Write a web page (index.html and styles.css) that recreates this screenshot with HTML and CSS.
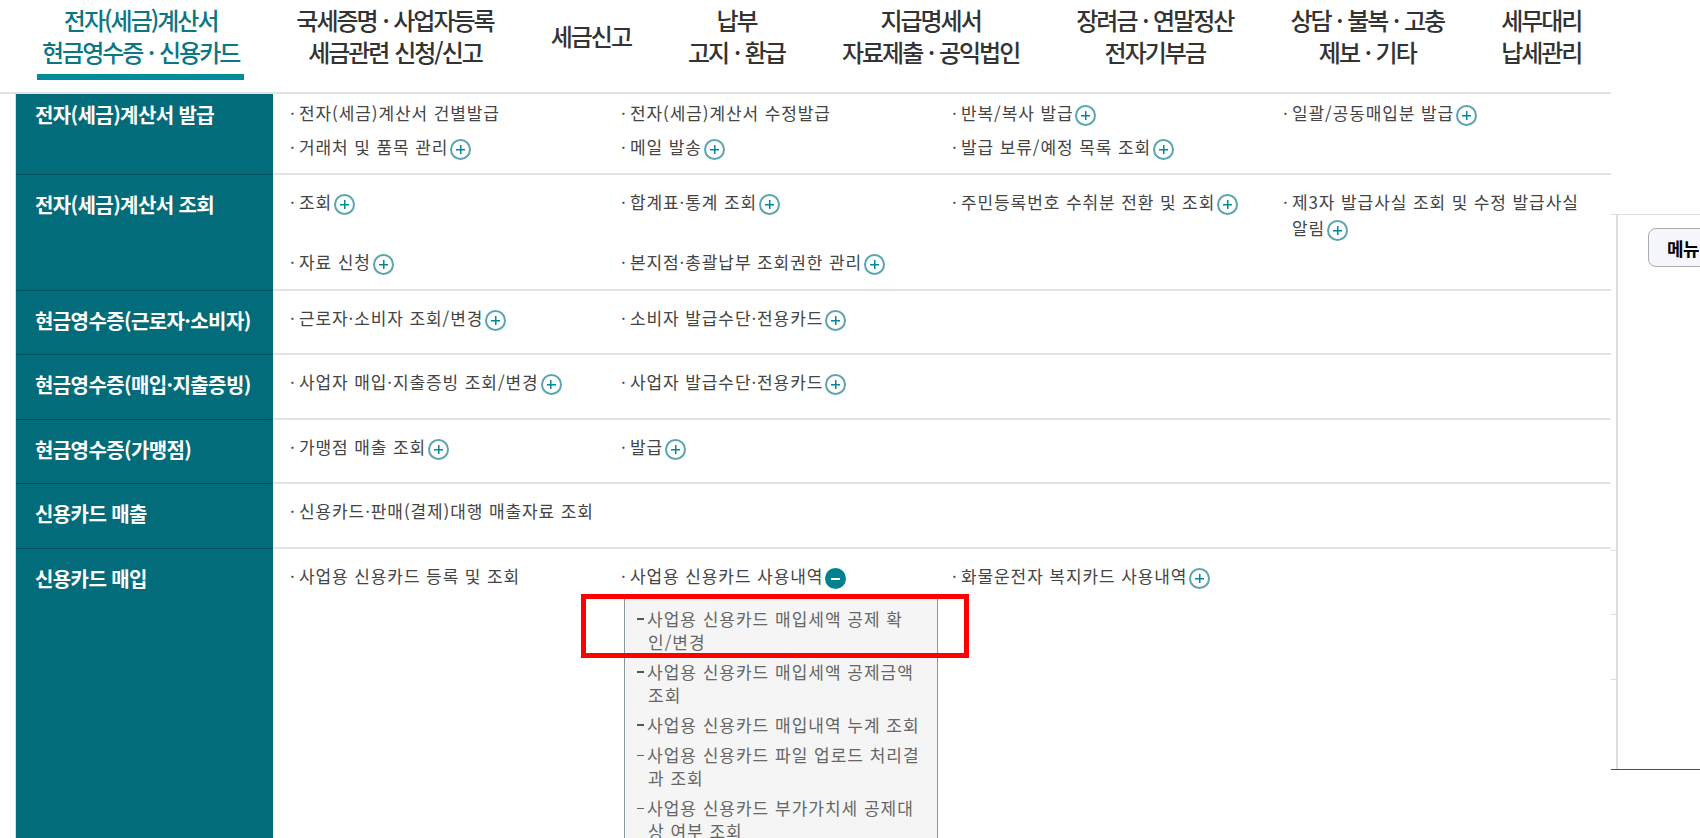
FILE: index.html
```html
<!DOCTYPE html>
<html lang="ko">
<head>
    <meta charset="utf-8" />
    <title>전자(세금)계산서 메뉴</title>
    <link rel="stylesheet" href="styles.css">
</head>
<body>
    <div id="page">
        <div class="gnb">
            <a class="gnb-item on">전자(세금)계산서<br>현금영수증 · 신용카드</a>
            <a class="gnb-item">국세증명 · 사업자등록<br>세금관련 신청/신고</a>
            <a class="gnb-item single">세금신고</a>
            <a class="gnb-item">납부<br>고지 · 환급</a>
            <a class="gnb-item">지급명세서<br>자료제출 · 공익법인</a>
            <a class="gnb-item">장려금 · 연말정산<br>전자기부금</a>
            <a class="gnb-item">상담 · 불복 · 고충<br>제보 · 기타</a>
            <a class="gnb-item">세무대리<br>납세관리</a>
        </div>

        <div class="menu">
            <div class="row row1">
                <div class="tit">전자(세금)계산서 발급</div>
                <ul class="cell">
                    <li>전자(세금)계산서 건별발급</li>
                    <li>전자(세금)계산서 수정발급</li>
                    <li>반복/복사 발급<i class="ico"></i></li>
                    <li>일괄/공동매입분 발급<i class="ico"></i></li>
                    <li>거래처 및 품목 관리<i class="ico"></i></li>
                    <li>메일 발송<i class="ico"></i></li>
                    <li>발급 보류/예정 목록 조회<i class="ico"></i></li>
                </ul>
            </div>
            <div class="row row2">
                <div class="tit">전자(세금)계산서 조회</div>
                <ul class="cell">
                    <li>조회<i class="ico"></i></li>
                    <li>합계표·통계 조회<i class="ico"></i></li>
                    <li>주민등록번호 수취분 전환 및 조회<i class="ico"></i></li>
                    <li>제3자 발급사실 조회 및 수정 발급사실 알림<i class="ico"></i></li>
                    <li>자료 신청<i class="ico"></i></li>
                    <li>본지점·총괄납부 조회권한 관리<i class="ico"></i></li>
                </ul>
            </div>
            <div class="row row3">
                <div class="tit">현금영수증(근로자·소비자)</div>
                <ul class="cell">
                    <li>근로자·소비자 조회/변경<i class="ico"></i></li>
                    <li>소비자 발급수단·전용카드<i class="ico"></i></li>
                </ul>
            </div>
            <div class="row row4">
                <div class="tit">현금영수증(매입·지출증빙)</div>
                <ul class="cell">
                    <li>사업자 매입·지출증빙 조회/변경<i class="ico"></i></li>
                    <li>사업자 발급수단·전용카드<i class="ico"></i></li>
                </ul>
            </div>
            <div class="row row3">
                <div class="tit">현금영수증(가맹점)</div>
                <ul class="cell">
                    <li>가맹점 매출 조회<i class="ico"></i></li>
                    <li>발급<i class="ico"></i></li>
                </ul>
            </div>
            <div class="row row4">
                <div class="tit">신용카드 매출</div>
                <ul class="cell">
                    <li class="wide">신용카드·판매(결제)대행 매출자료 조회</li>
                </ul>
            </div>
            <div class="row row-last">
                <div class="tit">신용카드 매입</div>
                <ul class="cell">
                    <li>사업용 신용카드 등록 및 조회</li>
                    <li>사업용 신용카드 사용내역<i class="ico minus"></i>
                        <ul class="sub">
                            <li class="seen">사업용 신용카드 매입세액 공제 확인/변경</li>
                            <li class="seen">사업용 신용카드 매입세액 공제금액 조회</li>
                            <li class="seen">사업용 신용카드 매입내역 누계 조회</li>
                            <li>사업용 신용카드 파일 업로드 처리결과 조회</li>
                            <li>사업용 신용카드 부가가치세 공제대상 여부 조회</li>
                        </ul>
                    </li>
                    <li>화물운전자 복지카드 사용내역<i class="ico"></i></li>
                </ul>
            </div>
        </div>

        <!-- 빨간 표시, 오른쪽 패널은 내용 위에 겹쳐 있음 -->
        <div class="mark"></div>
        <div class="side">
            <i class="tick t1"></i>
            <i class="tick t2"></i>
            <i class="tick t3"></i>
            <button class="side-btn">메뉴</button>
        </div>
    </div>
</body>
</html>
```

FILE: styles.css
```css
* {
    padding: 0;
    margin: 0;
    box-sizing: border-box;
}

html, body {
    height: 100%;
    overflow: hidden;
    background: #fff;
}

body {
    font-family: "Noto Sans CJK KR", "Noto Sans", sans-serif;
    color: #444;
}

ul {
    list-style: none;
}

#page {
    position: relative;
    width: 1700px;
    height: 838px;
    overflow: hidden;
}

/* 상단 메뉴 */
.gnb {
    display: flex;
    gap: 47px;
    width: 1611px;
    height: 94px;
    padding-left: 37px;
    border-bottom: 2px solid #e2e2e2;
}

.gnb-item {
    display: block;
    height: 80px;
    padding: 4px 5px 0;
    font-size: 24px;
    line-height: 32px;
    font-weight: 500;
    letter-spacing: -2px;
    word-spacing: 1px;
    text-align: center;
    white-space: nowrap;
    color: #333;
}

.gnb-item.single {
    padding-top: 20px;
}

.gnb-item.on {
    color: #0b7783;
    border-bottom: 6px solid #008c9b;
}

/* 메뉴 표 */
.menu {
    width: 1596px;
    margin-left: 15px;
    border-left: 1px solid #ddd;
}

.row {
    display: flex;
    border-bottom: 2px solid #e4e4e4;
}

.row1 { height: 81px; }
.row2 { height: 116px; }
.row3 { height: 64px; }
.row4 { height: 65px; }
.row-last { height: 300px; border-bottom: 0; }

.tit {
    flex: none;
    width: 257px;
    margin-bottom: -2px;
    padding: 17px 0 0 19px;
    font-size: 20px;
    line-height: 26px;
    font-weight: 700;
    letter-spacing: -0.6px;
    color: #fff;
    background: #026c7a;
    border-bottom: 1px solid #02525d;
}

.row1 .tit {
    padding-top: 8px;
}

.row-last .tit {
    margin-bottom: 0;
    border-bottom: 0;
}

.cell {
    flex: 1;
    display: grid;
    grid-template-columns: repeat(4, 331px);
    align-content: start;
    row-gap: 8px;
    padding: 14px 0 0 17px;
}

.row1 .cell {
    padding-top: 6px;
}

.cell > li {
    padding: 0 20px 0 9px;
    font-size: 17px;
    line-height: 26px;
    letter-spacing: 0.9px;
    text-indent: -9px;
    color: #444;
}

.cell > li::before {
    content: "·";
    display: inline-block;
    width: 9px;
    text-indent: 0;
    letter-spacing: 0;
}

.cell > li.wide {
    grid-column: span 2;
}

/* 더보기 아이콘 */
.ico {
    display: inline-block;
    width: 21px;
    height: 21px;
    margin-left: 2px;
    vertical-align: -6px;
    text-indent: 0;
    border: 2px solid #5aa5af;
    border-radius: 50%;
    background:
        linear-gradient(#00899a, #00899a) center / 9px 1.5px no-repeat,
        linear-gradient(#00899a, #00899a) center / 1.5px 9px no-repeat;
}

.ico.minus {
    border-color: #00818f;
    background: #00818f linear-gradient(#fff, #fff) center / 9px 2px no-repeat;
}

/* 하위 메뉴 */
.sub {
    width: 314px;
    margin: 8px 0 0 -6px;
    padding: 9px 15px 9px 23px;
    background: #f5f5f5;
    border: 1px solid #87979c;
    text-indent: 0;
}

.sub li {
    margin-bottom: 7px;
    font-size: 17px;
    line-height: 23px;
    letter-spacing: 1px;
    text-indent: -11px;
    color: #666;
}

.sub li::before {
    content: "";
    display: inline-block;
    width: 7px;
    height: 1px;
    margin-right: 3px;
    vertical-align: 6px;
    background: #666;
}

.sub li.seen::before {
    height: 2px;
    background: #555;
}

/* 빨간 표시 */
.mark {
    position: absolute;
    left: 581px;
    top: 594px;
    width: 388px;
    height: 64px;
    border: 5px solid #f00;
}

/* 오른쪽 패널 */
.side {
    position: absolute;
    left: 1616px;
    top: 214px;
    width: 84px;
    height: 556px;
    padding: 14px 0 0 30px;
    background: #fff;
    border-left: 2px solid #ddd;
}

.side::before {
    content: "";
    position: absolute;
    left: -7px;
    right: 0;
    top: 0;
    height: 1px;
    background: #ddd;
}

.side::after {
    content: "";
    position: absolute;
    left: -7px;
    right: 0;
    bottom: 0;
    height: 1px;
    background: #026c7a;
}

.tick {
    position: absolute;
    left: -7px;
    width: 5px;
    height: 1px;
    background: #ddd;
}

.t1 { top: 336px; }
.t2 { top: 400px; }
.t3 { top: 465px; }

.side-btn {
    display: block;
    width: 70px;
    height: 39px;
    padding-left: 18px;
    font-family: inherit;
    font-size: 18px;
    font-weight: 700;
    letter-spacing: -0.5px;
    text-align: left;
    white-space: nowrap;
    color: #000;
    background: #f5f7fc;
    border: 1px solid #aaa;
    border-radius: 8px;
}
```
